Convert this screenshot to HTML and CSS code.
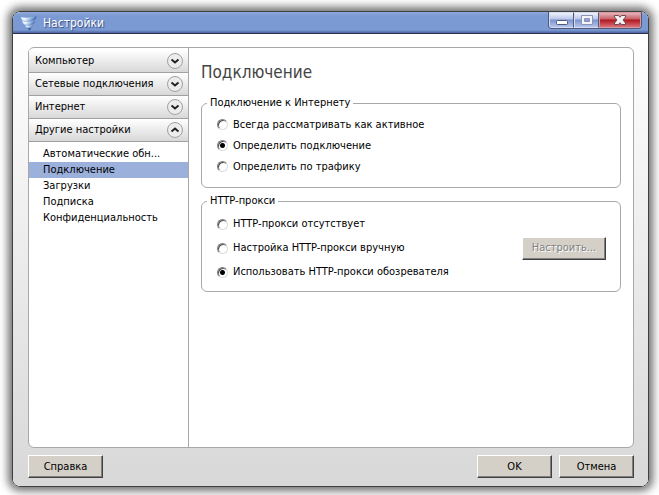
FILE: index.html
```html
<!DOCTYPE html>
<html lang="ru">
<head>
    <meta charset="UTF-8">
    <meta name="viewport" content="width=device-width, initial-scale=1.0">
    <title>Настройки</title>
    <link rel="stylesheet" href="styles.css">
</head>
<body>
    <div class="window">
        <header class="titlebar">
            <svg class="logo" width="16" height="16" viewBox="0 0 16 16">
                <defs>
                    <linearGradient id="shield" x1="0" y1="0" x2="1" y2="0.3">
                        <stop offset="0" stop-color="#d4e6f8"/>
                        <stop offset="0.4" stop-color="#eef6ff"/>
                        <stop offset="0.75" stop-color="#8fb2de"/>
                        <stop offset="1" stop-color="#3f66a8"/>
                    </linearGradient>
                </defs>
                <path d="M0 2Q8 4 15.500 0.500Q16 4.500 12 5.500Q6 7 1.500 5.500Q0 4 0 2Z" fill="url(#shield)"/>
                <path d="M1 6Q8 7.800 14.500 5.500Q14 8.500 11.500 9.300Q7 10.500 3.500 9.500Q1.500 8 1 6Z" fill="url(#shield)"/>
                <path d="M4 10.300Q8 11.200 12.500 9.800Q11.500 12 9.500 12.500Q7 13 5.500 12.300Z" fill="url(#shield)"/>
                <path d="M6.500 13.200Q8.500 13.500 10.500 12.800L8.500 15.500Z" fill="#34589a"/>
            </svg>
            <h1 class="title">Настройки</h1>
            <div class="controls">
                <button class="control" type="button" aria-label="Свернуть">
                    <svg width="12" height="12" viewBox="0 0 12 12"><rect x="0.5" y="6.500" width="11" height="4" rx="1" fill="#fff" stroke="#50597a"/></svg>
                </button>
                <button class="control" type="button" aria-label="Развернуть">
                    <svg width="12" height="12" viewBox="0 0 12 12"><path d="M.5 1.500h11v9h-11z M3.500 4.500h5v3h-5z" fill="#f4f4f8" fill-rule="evenodd" stroke="#8d93b5"/></svg>
                </button>
                <button class="control control-close" type="button" aria-label="Закрыть">
                    <svg width="12" height="12" viewBox="0 0 12 12"><path d="M0.500 1.500h4l1.500 1.800 1.500-1.800h4v1.500l-2.500 3 2.500 3v1.500h-4l-1.500-1.800-1.500 1.800h-4v-1.500l2.500-3-2.500-3z" fill="#f6f2f2" stroke="#6a4a58"/></svg>
                </button>
            </div>
        </header>
        <main class="content">
            <div class="panel">
                <nav class="sidebar">
                    <button class="section" type="button">Компьютер
                        <svg class="arrow" width="16" height="16" viewBox="0 0 16 16"><circle cx="8" cy="8" r="7.500"/><path d="M4.500 6.500l3.500 3 3.500-3"/></svg>
                    </button>
                    <button class="section" type="button">Сетевые подключения
                        <svg class="arrow" width="16" height="16" viewBox="0 0 16 16"><circle cx="8" cy="8" r="7.500"/><path d="M4.500 6.500l3.500 3 3.500-3"/></svg>
                    </button>
                    <button class="section" type="button">Интернет
                        <svg class="arrow" width="16" height="16" viewBox="0 0 16 16"><circle cx="8" cy="8" r="7.500"/><path d="M4.500 6.500l3.500 3 3.500-3"/></svg>
                    </button>
                    <button class="section" type="button" aria-expanded="true">Другие настройки
                        <svg class="arrow" width="16" height="16" viewBox="0 0 16 16"><circle cx="8" cy="8" r="7.500"/><path d="M4.500 9.500l3.500-3 3.500 3"/></svg>
                    </button>
                    <ul class="pages">
                        <li><a class="page" href="#">Автоматические обн...</a></li>
                        <li><a class="page page-current" href="#">Подключение</a></li>
                        <li><a class="page" href="#">Загрузки</a></li>
                        <li><a class="page" href="#">Подписка</a></li>
                        <li><a class="page" href="#">Конфиденциальность</a></li>
                    </ul>
                </nav>
                <form class="settings">
                    <h2 class="heading">Подключение</h2>
                    <fieldset class="group">
                        <legend>Подключение к Интернету</legend>
                        <label class="option"><input type="radio" name="connection">Всегда рассматривать как активное</label>
                        <label class="option"><input type="radio" name="connection" checked>Определить подключение</label>
                        <label class="option"><input type="radio" name="connection">Определить по трафику</label>
                    </fieldset>
                    <fieldset class="group group-proxy">
                        <legend>HTTP-прокси</legend>
                        <label class="option"><input type="radio" name="proxy">HTTP-прокси отсутствует</label>
                        <div class="row">
                            <label class="option"><input type="radio" name="proxy">Настройка HTTP-прокси вручную</label>
                            <button class="button" type="button" disabled>Настроить...</button>
                        </div>
                        <label class="option"><input type="radio" name="proxy" checked>Использовать HTTP-прокси обозревателя</label>
                    </fieldset>
                </form>
            </div>
            <footer class="footer">
                <button class="button" type="button">Справка</button>
                <button class="button button-ok" type="button">OK</button>
                <button class="button" type="button">Отмена</button>
            </footer>
        </main>
    </div>
</body>
</html>
```
FILE: styles.css
```css
* {
    box-sizing: border-box;
}
body {
    margin: 0;
    height: 100vh;
    padding: 11px 10px 8px 12px;
    background: #fff;
    font: 11px/16px "DejaVu Sans Condensed", "DejaVu Sans", sans-serif;
    color: #000;
    overflow: hidden;
}
button {
    font: inherit;
    color: inherit;
}
.window {
    display: flex;
    flex-direction: column;
    height: 100%;
    border: 1px solid #404040;
    border-radius: 8px;
    box-shadow: 0 0 9px 4px #707070;
    overflow: hidden;
}
.titlebar {
    display: flex;
    flex: none;
    align-items: center;
    height: 22px;
    padding: 0 6px 0 8px;
    background: linear-gradient(#8fa9dc, #7b99d2 4px, #7b99d2 18px, #4a64a0 21px, #303048 21px);
}
.title {
    flex: 1;
    margin: 0 0 0 6px;
    font-size: 12px;
    font-weight: normal;
    color: #fff;
    text-shadow: 1px 1px 1px #304880;
}
.controls {
    display: flex;
    align-self: flex-start;
    border: 1px solid #50597a;
    border-top: 0;
    border-radius: 0 0 4px 4px;
    overflow: hidden;
}
.control {
    display: flex;
    align-items: center;
    justify-content: center;
    width: 25px;
    height: 16px;
    padding: 0;
    border: 1px solid #d4dcf2;
    border-right-color: #50597a;
    background: linear-gradient(#f0f3fb, #b9c6e8 6px, #7b94d0 7px, #b4c4ea);
}
.control-close {
    width: 42px;
    border-color: #d89aa0;
    background: linear-gradient(#e6b4b8, #c86068 6px, #b01820 7px, #d87078);
}
.content {
    display: flex;
    flex: 1;
    flex-direction: column;
    padding: 13px 14px 8px 15px;
    background: linear-gradient(#fff, #d8d8d8);
}
.panel {
    display: flex;
    flex: 1;
    border: 1px solid #a8a8a8;
    border-radius: 6px;
    background: #fff;
}
.sidebar {
    flex: none;
    width: 160px;
    padding-top: 2px;
    border-right: 1px solid #a8a8a8;
}
.section {
    display: flex;
    align-items: center;
    justify-content: space-between;
    width: 100%;
    height: 23px;
    padding: 0 5px 0 6px;
    border: 0;
    border-bottom: 1px solid #a0a0a0;
    background: linear-gradient(#fff, #d8d8d8);
}
.arrow circle {
    fill: #ececec;
    stroke: #a0a0a0;
}
.arrow path {
    fill: none;
    stroke: #222;
    stroke-width: 2;
}
.pages {
    margin: 0;
    padding: 4px 0;
    list-style: none;
}
.page {
    display: block;
    padding-left: 14px;
    color: #000;
    text-decoration: none;
}
.page-current {
    background: #9cb0dc;
}
.settings {
    flex: 1;
    padding: 14px 12px 0 12px;
}
.heading {
    margin: 0 0 13px;
    font-size: 17px;
    font-weight: normal;
    line-height: 20px;
    color: #444;
}
.group {
    margin: 0 0 5px;
    padding: 3px 14px 10px 15px;
    border: 1px solid #a8a8a8;
    border-radius: 6px;
}
.group legend {
    margin-left: -10px;
    padding: 0 3px;
}
.group-proxy {
    padding-bottom: 7px;
}
.option {
    display: flex;
    align-items: center;
    height: 21px;
}
.group-proxy .option {
    height: 24px;
}
.row {
    display: flex;
    align-items: center;
    justify-content: space-between;
}
input[type="radio"] {
    appearance: none;
    flex: none;
    width: 11px;
    height: 11px;
    margin: 0 5px 0 0;
    border: 1px solid;
    border-color: #808080 #e0ddd6 #e0ddd6 #808080;
    border-radius: 50%;
    background: #fff;
    box-shadow: inset 1px 1px #505050;
}
input[type="radio"]:checked {
    background: radial-gradient(circle, #000 1px, #000 2px, #fff 3px);
}
.button {
    width: 75px;
    height: 23px;
    padding: 0;
    border: 1px solid;
    border-color: #fff #404040 #404040 #fff;
    background: #d4d0c8;
    box-shadow: inset -1px -1px #808080;
}
.row .button {
    width: 84px;
}
.button:disabled {
    color: #808080;
    text-shadow: 1px 1px #fff;
}
.footer {
    display: flex;
    flex: none;
    gap: 7px;
    padding-top: 7px;
}
.button-ok {
    margin-left: auto;
}
```
